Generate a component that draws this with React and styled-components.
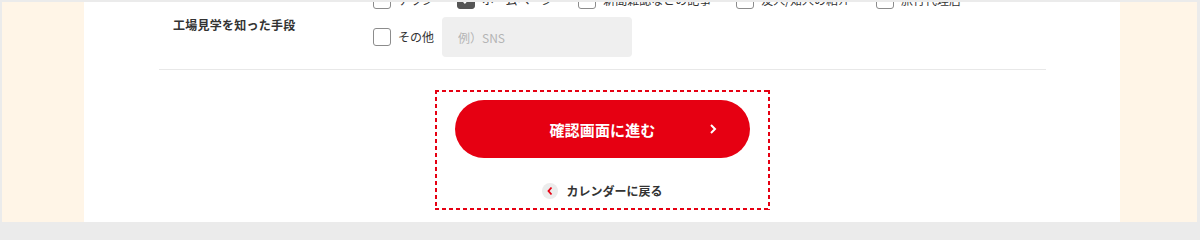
import styled, { createGlobalStyle } from "styled-components";

const GlobalStyle = createGlobalStyle`
  html, body {
    margin: 0;
    padding: 0;
    height: 224px;
    overflow: hidden;
    background: #ebebeb;
  }
  body {
    font-family: "Noto Sans CJK JP", "Noto Sans", sans-serif;
    color: #333;
  }
`;

const Frame = styled.div`
  height: 224px;
  box-sizing: border-box;
  padding: 2px 3px 2px 2px;
`;

const Columns = styled.div`
  display: grid;
  grid-template-columns: 82px 1fr 77px;
  height: 100%;
  overflow: hidden;
`;

const Side = styled.div`
  background: #fff5e7;
`;

const Main = styled.main`
  background: #fff;
  padding: 0 74px 0 75px;
  overflow: hidden;
`;

const Content = styled.div`
  margin-top: -22px;
`;

const FormRow = styled.div`
  display: flex;
  align-items: center;
  padding: 10px 14px 12px;
  border-bottom: 1px solid #e8e8e8;
`;

const Label = styled.div`
  width: 200px;
  flex-shrink: 0;
  font-size: 12px;
  font-weight: 700;
  letter-spacing: 0.02em;
  line-height: 18px;
  padding-top: 2px;
`;

const Options = styled.div`
  display: flex;
  flex-direction: column;
  align-items: flex-start;
  gap: 7px;
`;

const Line = styled.div`
  display: flex;
  align-items: center;
`;

const Option = styled.label`
  display: flex;
  align-items: center;
  gap: 7px;
  margin-right: ${(p) => p.$gap ?? 0}px;
  font-size: 12px;
  line-height: 20px;
  white-space: nowrap;
  color: #333;
`;

const Box = styled.span`
  width: 16px;
  height: 16px;
  border: 1px solid ${(p) => (p.$checked ? "#555" : "#8c8c8c")};
  border-radius: 3px;
  background: ${(p) => (p.$checked ? "#555" : "#fff")};
  display: flex;
  align-items: center;
  justify-content: center;
  flex-shrink: 0;
`;

const TextInput = styled.input`
  width: 190px;
  height: 40px;
  box-sizing: border-box;
  border: none;
  border-radius: 4px;
  background: #efefef;
  padding: 0 16px;
  margin-left: 1px;
  font-family: inherit;
  font-size: 12px;
  color: #333;
  &::placeholder {
    color: #b4b4b4;
  }
`;

const Actions = styled.div`
  display: flex;
  justify-content: center;
  margin-top: 20px;
`;

const DashedBox = styled.div`
  width: 335px;
  box-sizing: border-box;
  padding: 10px 21px 10px;
  display: flex;
  flex-direction: column;
  align-items: center;
  background:
    repeating-linear-gradient(90deg, #e60012 0 4px, transparent 4px 7px) top left / 100% 2px no-repeat,
    repeating-linear-gradient(90deg, #e60012 0 4px, transparent 4px 7px) bottom left / 100% 2px no-repeat,
    repeating-linear-gradient(180deg, #e60012 0 4px, transparent 4px 7px) top left / 2px 100% no-repeat,
    repeating-linear-gradient(180deg, #e60012 0 4px, transparent 4px 7px) top right / 2px 100% no-repeat;
`;

const PrimaryButton = styled.button`
  position: relative;
  width: 295px;
  height: 58px;
  border: none;
  border-radius: 29px;
  background: #e60012;
  color: #fff;
  font-family: inherit;
  font-size: 15px;
  font-weight: 700;
  letter-spacing: 0.01em;
  cursor: pointer;
`;

const ButtonArrow = styled.svg`
  position: absolute;
  right: 32px;
  top: 50%;
  transform: translateY(-50%);
`;

const BackLink = styled.a`
  display: flex;
  align-items: center;
  gap: 8px;
  margin-top: 24px;
  font-size: 12px;
  font-weight: 700;
  line-height: 18px;
  color: #333;
  text-decoration: none;
`;

const BackCircle = styled.span`
  width: 16px;
  height: 16px;
  border-radius: 50%;
  background: #ececec;
  display: flex;
  align-items: center;
  justify-content: center;
`;

const Check = () => (
  <svg width="12" height="12" viewBox="0 0 12 12">
    <path d="M2.5 6.2l2.4 2.4 4.6-5" fill="none" stroke="#fff" strokeWidth="1.8" />
  </svg>
);

const options = [
  { text: "チラシ", gap: 23 },
  { text: "ホームページ", checked: true, gap: 25 },
  { text: "新聞雑誌などの記事", gap: 25 },
  { text: "友人/知人の紹介", gap: 26 },
  { text: "旅行代理店", gap: 0 },
];

export default function App() {
  return (
    <>
      <GlobalStyle />
      <Frame>
        <Columns>
          <Side />
          <Main>
            <Content>
              <FormRow>
                <Label>工場見学を知った手段</Label>
                <Options>
                  <Line>
                    {options.map((o) => (
                      <Option key={o.text} $gap={o.gap}>
                        <Box $checked={o.checked}>{o.checked && <Check />}</Box>
                        {o.text}
                      </Option>
                    ))}
                  </Line>
                  <Line>
                    <Option>
                      <Box />
                      その他
                      <TextInput placeholder="例）SNS" />
                    </Option>
                  </Line>
                </Options>
              </FormRow>
              <Actions>
                <DashedBox>
                  <PrimaryButton type="button">
                    確認画面に進む
                    <ButtonArrow width="10" height="12" viewBox="0 0 10 12">
                      <path d="M3 2l4 4-4 4" fill="none" stroke="#fff" strokeWidth="2" />
                    </ButtonArrow>
                  </PrimaryButton>
                  <BackLink href="#">
                    <BackCircle>
                      <svg width="8" height="10" viewBox="0 0 8 10">
                        <path d="M5.5 1.5L2.5 5l3 3.5" fill="none" stroke="#e60012" strokeWidth="1.8" />
                      </svg>
                    </BackCircle>
                    カレンダーに戻る
                  </BackLink>
                </DashedBox>
              </Actions>
            </Content>
          </Main>
          <Side />
        </Columns>
      </Frame>
    </>
  );
}
